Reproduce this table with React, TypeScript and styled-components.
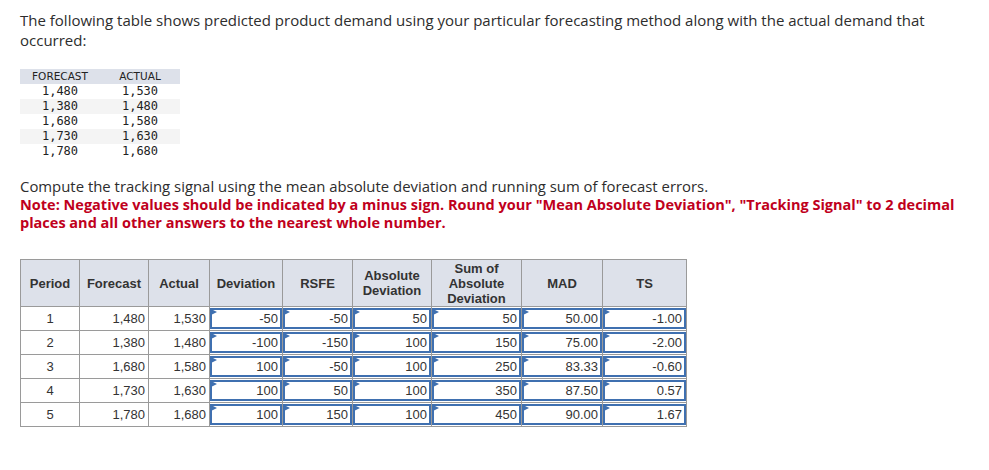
import React from "react";
import styled, { createGlobalStyle } from "styled-components";

const Global = createGlobalStyle`
  html, body { margin: 0; padding: 0; background: #fff; }
  body { font-family: "Open Sans", "Liberation Sans", sans-serif; }
`;

const Page = styled.div`
  padding: 10px 20px 20px 20px;
  width: 949px;
`;

const Intro = styled.p`
  margin: 0;
  font-size: 15px;
  line-height: 20px;
  color: #2d2d2d;
`;

const DataTable = styled.table`
  margin-top: 19px;
  border-collapse: collapse;
  font-family: "DejaVu Sans Mono", "Liberation Mono", monospace;
  font-size: 12px;
  color: #222;
`;

const DataHead = styled.th`
  width: 80px;
  height: 15px;
  padding: 0;
  background: #dde1ea;
  font-weight: normal;
  text-align: center;
  font-family: "DejaVu Sans", "Liberation Sans", sans-serif;
  font-size: 10.5px;
  line-height: 15px;
`;

const DataRow = styled.tr<{ $striped: boolean }>`
  background: ${(p) => (p.$striped ? "#f4f4f4" : "#fff")};
`;

const DataCell = styled.td`
  height: 15px;
  padding: 0;
  line-height: 15px;
  text-align: center;
`;

const Instruction = styled.p`
  margin: 17px 0 0 0;
  font-size: 14.9px;
  line-height: 20px;
  color: #2d2d2d;
`;

const Note = styled.p`
  margin: 0;
  font-size: 14.5px;
  line-height: 18px;
  font-weight: 700;
  color: #c0001c;
`;

const Grid = styled.table`
  margin-top: 27px;
  border-collapse: collapse;
  font-family: "Liberation Sans", Arial, sans-serif;
  font-size: 13px;
  color: #333;
`;

const HeadCell = styled.th<{ $w: number }>`
  width: ${(p) => p.$w}px;
  height: 47px;
  padding: 0 4px;
  box-sizing: border-box;
  background: #dde1ea;
  border: 1px solid #9a9a9a;
  font-weight: 700;
  font-size: 13px;
  line-height: 15px;
  text-align: center;
  color: #333;
`;

const Cell = styled.td`
  height: 23px;
  padding: 0 3px;
  box-sizing: border-box;
  border: 1px solid #9a9a9a;
  text-align: right;
  line-height: 15px;
`;

const CenterCell = styled(Cell)`
  text-align: center;
`;

const InputCell = styled.td`
  height: 23px;
  padding: 0;
  border: 1px solid #9a9a9a;
`;

const InputBox = styled.div`
  position: relative;
  height: 21px;
  box-sizing: border-box;
  border: 2px solid #3f70b0;
  background: #fff;
  text-align: right;
  padding: 0 2px;
  line-height: 17px;
`;

const Flag = styled.span`
  position: absolute;
  left: -1px;
  top: -1px;
  width: 0;
  height: 0;
  border-top: 3px solid transparent;
  border-bottom: 3px solid transparent;
  border-left: 6px solid #3f70b0;
`;

const given = [
  ["1,480", "1,530"],
  ["1,380", "1,480"],
  ["1,680", "1,580"],
  ["1,730", "1,630"],
  ["1,780", "1,680"],
];

const answers = [
  ["-50", "-50", "50", "50", "50.00", "-1.00"],
  ["-100", "-150", "100", "150", "75.00", "-2.00"],
  ["100", "-50", "100", "250", "83.33", "-0.60"],
  ["100", "50", "100", "350", "87.50", "0.57"],
  ["100", "150", "100", "450", "90.00", "1.67"],
];

const headers: { label: React.ReactNode; w: number }[] = [
  { label: "Period", w: 59 },
  { label: "Forecast", w: 69 },
  { label: "Actual", w: 61 },
  { label: "Deviation", w: 73 },
  { label: "RSFE", w: 70 },
  { label: <>Absolute<br />Deviation</>, w: 79 },
  { label: <>Sum of<br />Absolute<br />Deviation</>, w: 90 },
  { label: "MAD", w: 81 },
  { label: "TS", w: 84 },
];

export default function App() {
  return (
    <Page>
      <Global />
      <Intro>
        The following table shows predicted product demand using your particular forecasting method
        along with the actual demand that occurred:
      </Intro>
      <DataTable>
        <thead>
          <tr>
            <DataHead>FORECAST</DataHead>
            <DataHead>ACTUAL</DataHead>
          </tr>
        </thead>
        <tbody>
          {given.map((r, i) => (
            <DataRow key={i} $striped={i % 2 === 1}>
              <DataCell>{r[0]}</DataCell>
              <DataCell>{r[1]}</DataCell>
            </DataRow>
          ))}
        </tbody>
      </DataTable>
      <Instruction>
        Compute the tracking signal using the mean absolute deviation and running sum of forecast errors.
      </Instruction>
      <Note>
        Note: Negative values should be indicated by a minus sign. Round your "Mean Absolute Deviation",
        "Tracking Signal" to 2 decimal places and all other answers to the nearest whole number.
      </Note>
      <Grid>
        <thead>
          <tr>
            {headers.map((h, i) => (
              <HeadCell key={i} $w={h.w}>
                {h.label}
              </HeadCell>
            ))}
          </tr>
        </thead>
        <tbody>
          {given.map((r, i) => (
            <tr key={i}>
              <CenterCell>{i + 1}</CenterCell>
              <Cell>{r[0]}</Cell>
              <Cell>{r[1]}</Cell>
              {answers[i].map((a, j) => (
                <InputCell key={j}>
                  <InputBox>
                    <Flag />
                    {a}
                  </InputBox>
                </InputCell>
              ))}
            </tr>
          ))}
        </tbody>
      </Grid>
    </Page>
  );
}
